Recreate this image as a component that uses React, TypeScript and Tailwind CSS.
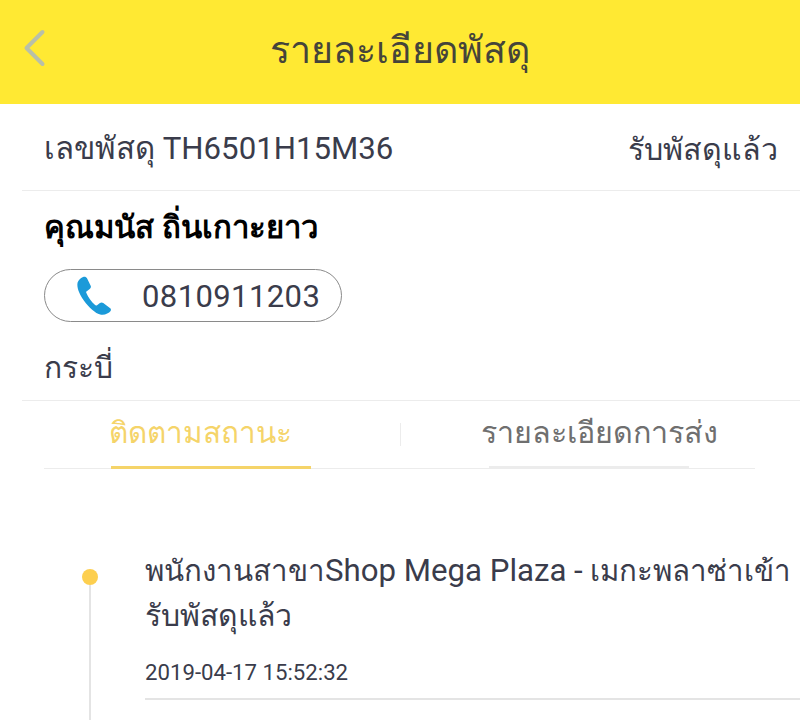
const font = { fontFamily: '"Roboto", "Noto Sans", sans-serif' }

const App = () => {
  return (
    <div style={font} className="w-[800px] h-[720px] overflow-hidden bg-white text-[#3a3c4b]">
      <div className="h-[104px] bg-[#ffe933] flex items-center relative pb-[4px]">
        <svg className="absolute left-[22px] top-[29px]" width="24" height="38" viewBox="0 0 24 38" fill="none">
          <path d="M20.5 3 L4.5 19 L20.5 35" stroke="#b9c0a8" strokeWidth="4" strokeLinecap="round" strokeLinejoin="round" />
        </svg>
        <div className="w-full text-center text-[37.6px] leading-[44px] text-[#45443a]">รายละเอียดพัสดุ</div>
      </div>

      <div className="pl-[22px]">
        <div className="h-[87px] border-b border-[#ececec] flex items-center justify-between pl-[22px] pr-[22px] pt-[5px] text-[31.2px]">
          <span>เลขพัสดุ TH6501H15M36</span>
          <span className="text-[30.4px]">รับพัสดุแล้ว</span>
        </div>
      </div>

      <div className="pl-[44px] pt-[17px]">
        <div className="text-[31.1px] leading-[40px] font-bold text-black">คุณมนัส ถิ่นเกาะยาว</div>
        <div className="mt-[21px] w-[298px] h-[53px] rounded-full border border-[#8a8a8a] flex items-center pl-[26px]">
          <svg width="44" height="46" viewBox="0 0 24 24" fill="#1b9ad9">
            <path d="M6.6 1.6 C5.6 2 4 3.2 3.6 4.6 C3 7 4.4 10.8 7 14.4 C9.6 18 13 21.4 16.4 22.2 C18.4 22.6 20.6 21.4 21.6 20.2 C22 19.6 21.8 19 21.2 18.6 L17.6 15.8 C17 15.4 16.4 15.4 15.8 15.8 L14.2 17 C13.8 17.2 13.4 17.2 13 16.8 C11 15 9.4 12.8 8.4 10.4 C8.2 10 8.2 9.6 8.6 9.4 L10.2 8.2 C10.8 7.8 11 7.2 10.8 6.6 L8.8 2.4 C8.4 1.6 7.4 1.2 6.6 1.6 Z" />
          </svg>
          <span className="ml-[27px] text-[31px] tracking-[0.4px] relative top-[2px]">0810911203</span>
        </div>
        <div className="mt-[24px] text-[30px] leading-[44px]">กระบี่</div>
      </div>

      <div className="ml-[22px] mt-[10px] h-[1px] bg-[#ececec]" />

      <div className="ml-[44px] mr-[45px] h-[68px] border-b border-[#ececec] flex items-center relative">
        <div className="w-[356px] flex justify-center h-full relative">
          <span className="absolute left-[65px] top-[10px] text-[29.7px] leading-[44px] text-[#f5d469]">ติดตามสถานะ</span>
          <div className="absolute left-[67px] bottom-[-1px] w-[200px] h-[3px] bg-[#f5d469]" />
        </div>
        <div className="w-[1px] h-[23px] bg-[#ececec]" />
        <div className="flex-1 h-full relative">
          <span className="absolute left-[80px] top-[10px] text-[30.5px] leading-[44px] text-[#6f6f6f]">รายละเอียดการส่ง</span>
          <div className="absolute left-[88px] bottom-[-1px] w-[200px] h-[3px] bg-[#ececec]" />
        </div>
      </div>

      <div className="flex mt-[79px]">
        <div className="w-[145px] relative shrink-0">
          <div className="absolute left-[82px] top-[21px] w-[16px] h-[16px] rounded-full bg-[#fdcf4f]" />
          <div className="absolute left-[89px] top-[37px] w-[2px] h-[200px] bg-[#e4e4e4]" />
        </div>
        <div className="flex-1 min-w-0">
          <div className="text-[29.4px] leading-[45px] h-[45px] whitespace-nowrap">
            พนักงานสาขา<span className="text-[31.2px]">Shop Mega Plaza - </span>เมกะพลาซ่าเข้า
          </div>
          <div className="text-[30.2px] leading-[45px]">รับพัสดุแล้ว</div>
          <div className="mt-[18px] text-[22.2px] leading-[32px]">2019-04-17 15:52:32</div>
          <div className="mt-[10px] h-[2px] bg-[#e4e4e4]" />
        </div>
      </div>
    </div>
  )
}

export default App
